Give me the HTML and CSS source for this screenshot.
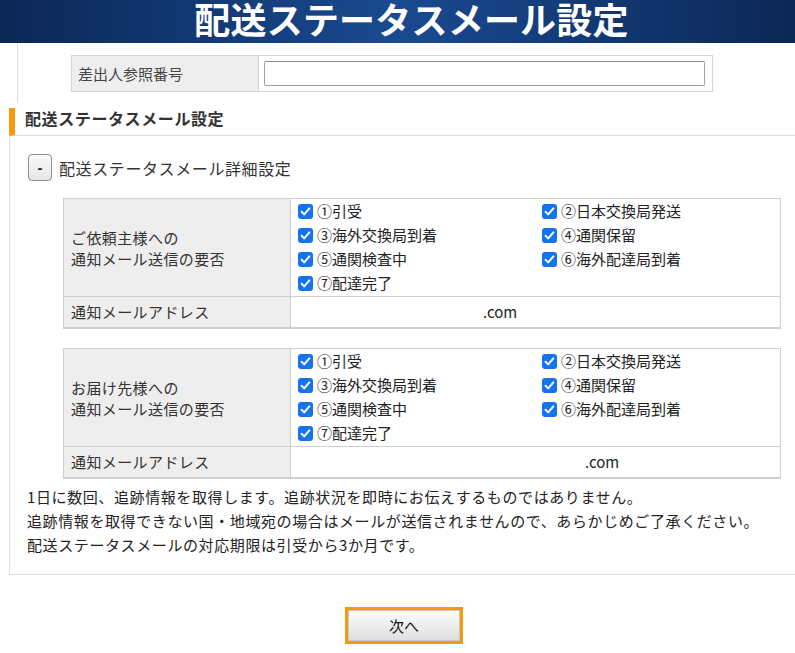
FILE: index.html
```html
<!DOCTYPE html>
<html lang="ja">
<head>
<meta charset="utf-8">
<title>配送ステータスメール設定</title>
<link rel="stylesheet" href="styles.css">
</head>
<body>
<div class="header"><h1 class="title">配送ステータスメール設定</h1></div>

<div class="top-area">
  <div class="ref-table">
    <div class="ref-label">差出人参照番号</div>
    <div class="ref-field"><input type="text" class="ref-input"></div>
  </div>
</div>

<div class="section">
  <h2 class="section-head">配送ステータスメール設定</h2>
  <div class="section-body">
    <div class="toggle-row">
      <button class="toggle" type="button">-</button>
      <span class="toggle-text">配送ステータスメール詳細設定</span>
    </div>

    <div class="notify">
      <div class="n-label n-main">ご依頼主様への<br>通知メール送信の要否</div>
      <div class="n-checks">
        <label class="chk"><span class="box"><svg viewBox="0 0 15 15"><path d="M3.6 7.8 L6.2 10.4 L11.4 4.4" /></svg></span>①引受</label>
        <label class="chk"><span class="box"><svg viewBox="0 0 15 15"><path d="M3.6 7.8 L6.2 10.4 L11.4 4.4" /></svg></span>②日本交換局発送</label>
        <label class="chk"><span class="box"><svg viewBox="0 0 15 15"><path d="M3.6 7.8 L6.2 10.4 L11.4 4.4" /></svg></span>③海外交換局到着</label>
        <label class="chk"><span class="box"><svg viewBox="0 0 15 15"><path d="M3.6 7.8 L6.2 10.4 L11.4 4.4" /></svg></span>④通関保留</label>
        <label class="chk"><span class="box"><svg viewBox="0 0 15 15"><path d="M3.6 7.8 L6.2 10.4 L11.4 4.4" /></svg></span>⑤通関検査中</label>
        <label class="chk"><span class="box"><svg viewBox="0 0 15 15"><path d="M3.6 7.8 L6.2 10.4 L11.4 4.4" /></svg></span>⑥海外配達局到着</label>
        <label class="chk"><span class="box"><svg viewBox="0 0 15 15"><path d="M3.6 7.8 L6.2 10.4 L11.4 4.4" /></svg></span>⑦配達完了</label>
      </div>
      <div class="n-label n-addr-label">通知メールアドレス</div>
      <div class="n-addr addr-1">.com</div>
    </div>

    <div class="notify notify-2">
      <div class="n-label n-main">お届け先様への<br>通知メール送信の要否</div>
      <div class="n-checks">
        <label class="chk"><span class="box"><svg viewBox="0 0 15 15"><path d="M3.6 7.8 L6.2 10.4 L11.4 4.4" /></svg></span>①引受</label>
        <label class="chk"><span class="box"><svg viewBox="0 0 15 15"><path d="M3.6 7.8 L6.2 10.4 L11.4 4.4" /></svg></span>②日本交換局発送</label>
        <label class="chk"><span class="box"><svg viewBox="0 0 15 15"><path d="M3.6 7.8 L6.2 10.4 L11.4 4.4" /></svg></span>③海外交換局到着</label>
        <label class="chk"><span class="box"><svg viewBox="0 0 15 15"><path d="M3.6 7.8 L6.2 10.4 L11.4 4.4" /></svg></span>④通関保留</label>
        <label class="chk"><span class="box"><svg viewBox="0 0 15 15"><path d="M3.6 7.8 L6.2 10.4 L11.4 4.4" /></svg></span>⑤通関検査中</label>
        <label class="chk"><span class="box"><svg viewBox="0 0 15 15"><path d="M3.6 7.8 L6.2 10.4 L11.4 4.4" /></svg></span>⑥海外配達局到着</label>
        <label class="chk"><span class="box"><svg viewBox="0 0 15 15"><path d="M3.6 7.8 L6.2 10.4 L11.4 4.4" /></svg></span>⑦配達完了</label>
      </div>
      <div class="n-label n-addr-label">通知メールアドレス</div>
      <div class="n-addr addr-2">.com</div>
    </div>

    <div class="notes">
      <p>1日に数回、追跡情報を取得します。追跡状況を即時にお伝えするものではありません。</p>
      <p>追跡情報を取得できない国・地域宛の場合はメールが送信されませんので、あらかじめご了承ください。</p>
      <p>配送ステータスメールの対応期限は引受から3か月です。</p>
    </div>
  </div>
</div>

<div class="actions">
  <button class="next" type="button">次へ</button>
</div>
</body>
</html>
```

FILE: styles.css
```css
* { box-sizing: border-box; }

body {
  margin: 0;
  width: 795px;
  height: 653px;
  overflow: hidden;
  background: #fff;
  font-family: "Noto Sans CJK JP", "Noto Sans", sans-serif;
  color: #222;
}

.header {
  height: 43px;
  overflow: hidden;
  background: linear-gradient(90deg, #0b2756 0%, #1a4a90 50%, #0b2756 100%);
  padding-left: 28px;
}

.title {
  margin: 0;
  text-align: center;
  color: #fff;
  font-size: 36px;
  font-weight: 700;
  line-height: 36px;
  letter-spacing: 0.2px;
}

.top-area {
  margin-left: 17px;
  border-left: 1px solid #dcdcdc;
  padding: 12px 0 11px 53px;
}

.ref-table {
  display: flex;
  width: 642px;
  height: 37px;
  border: 1px solid #d4d4d4;
}

.ref-label {
  width: 187px;
  background: #eeeeee;
  border-right: 1px solid #d4d4d4;
  padding-left: 6px;
  font-size: 15px;
  line-height: 35px;
  color: #444;
}

.ref-field {
  flex: 1;
  padding: 5px 6px 0 5px;
}

.ref-input {
  display: block;
  width: 441px;
  height: 25px;
  border: 1px solid #a0a0a0;
  border-top-color: #8a8a8a;
  border-radius: 2px;
  background: #fff;
  margin: 0;
}

.section {
  margin-top: 5px;
  margin-left: 9px;
  border-left: 1px solid #dcdcdc;
  border-bottom: 1px solid #dcdcdc;
}

.section-head {
  margin: 0 0 0 -1px;
  height: 28px;
  border-left: 6px solid #f7990c;
  border-bottom: 1px solid #dcdcdc;
  padding-left: 10px;
  font-size: 16px;
  font-weight: 700;
  line-height: 21px;
  letter-spacing: 0.6px;
  color: #333;
}

.section-body {
  padding: 18px 0 17px 0;
}

.toggle-row {
  display: flex;
  align-items: center;
  margin-left: 18px;
  height: 27px;
}

.toggle {
  width: 24px;
  height: 27px;
  margin: 0;
  padding: 0;
  border: 1px solid #8f8f8f;
  border-radius: 4px;
  background: linear-gradient(#fafafa, #e6e6e6);
  font-family: "Liberation Sans", sans-serif;
  font-size: 15px;
  font-weight: 700;
  color: #222;
  line-height: 23px;
}

.toggle-text {
  margin-left: 7px;
  font-size: 16px;
  letter-spacing: 0.6px;
  color: #333;
  line-height: 24px;
}

.notify {
  display: grid;
  grid-template-columns: 227px 1fr;
  width: 718px;
  margin: 17px 0 0 53px;
  border: 1px solid #cfcfcf;
  border-bottom: 2px solid #cfcfcf;
}

.notify-2 { margin-top: 19px; }

.n-label {
  background: #eeeeee;
  border-right: 1px solid #cfcfcf;
  padding-left: 7px;
  font-size: 15px;
  letter-spacing: 0.4px;
  color: #333;
}

.n-main {
  display: flex;
  align-items: center;
  line-height: 21px;
  padding-top: 1px;
}

.n-checks {
  display: grid;
  grid-template-columns: 244px 1fr;
  grid-auto-rows: 24px;
  padding: 0 0 1px 7px;
}

.chk {
  display: flex;
  align-items: center;
  font-size: 15px;
  line-height: 20px;
  color: #222;
}

.box {
  width: 15px;
  height: 15px;
  border-radius: 3px;
  background: #1673f0;
  margin-right: 4px;
  flex: none;
  display: block;
}

.box svg {
  display: block;
  width: 15px;
  height: 15px;
}

.box path {
  fill: none;
  stroke: #fff;
  stroke-width: 2;
  stroke-linecap: round;
  stroke-linejoin: round;
}

.n-addr-label,
.n-addr {
  border-top: 1px solid #cfcfcf;
  height: 31px;
  line-height: 29px;
}

.n-addr {
  font-size: 15px;
  color: #222;
}

.addr-1 { padding-left: 192px; }
.addr-2 { padding-left: 294px; }

.notes {
  margin-top: 6px;
  padding-left: 17px;
  font-size: 15px;
  line-height: 24px;
  color: #222;
  letter-spacing: 0.6px;
}

.notes p { margin: 0; }

.actions {
  display: flex;
  margin-top: 32px;
  padding-left: 345px;
}

.next {
  width: 118px;
  height: 37px;
  margin: 0;
  border: 3px solid #f7990c;
  background: linear-gradient(#fdfdfd, #dedede);
  box-shadow: inset 0 0 0 1px #c8c8c8;
  font-family: "Noto Sans CJK JP", sans-serif;
  font-size: 15px;
  color: #111;
  padding: 0;
}
```
